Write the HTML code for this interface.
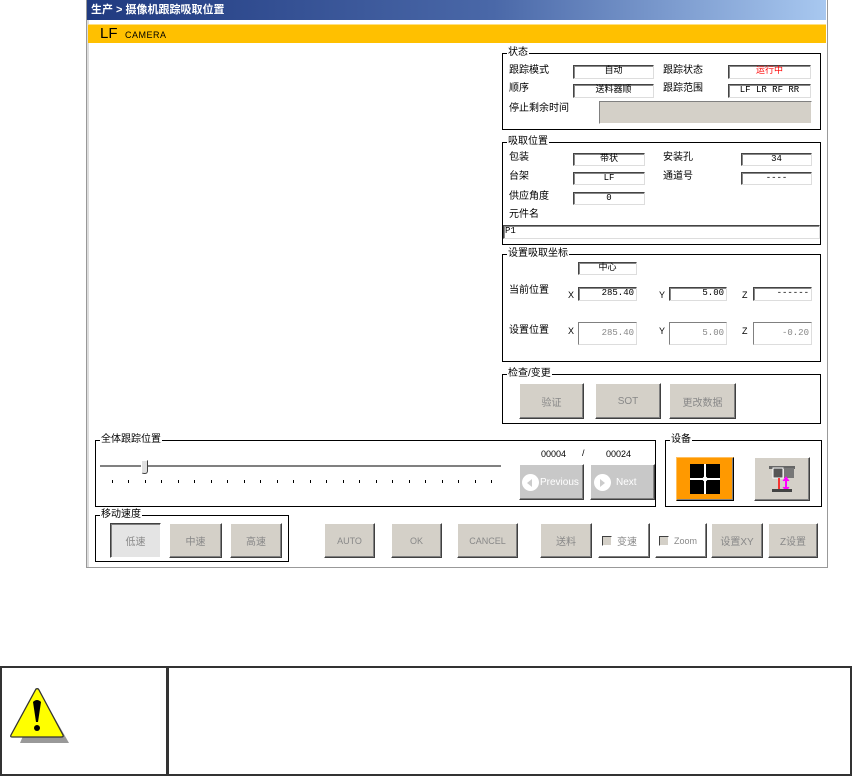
<!DOCTYPE html>
<html><head><meta charset="utf-8"><style>
*{margin:0;padding:0;box-sizing:border-box}
body{width:852px;height:776px;background:#fff;position:relative;overflow:hidden;font-family:"Liberation Sans","Noto Sans CJK SC",sans-serif;font-size:10px;color:#000}
.a{position:absolute}
.win{left:86px;top:0;width:742px;height:568px;border:1px solid #999;border-top:none;box-shadow:inset 2px 0 0 #ddd}
.title{left:87px;top:0;width:739px;height:20px;background:linear-gradient(90deg,#203a80,#4a68a8 55%,#a8c8f0);color:#fff;font-weight:bold;font-size:11px;line-height:20px;padding-left:4px}
.yb{left:88px;top:24px;width:738px;height:19px;background:#ffc000;border-top:1px solid #ffe080}
.g{position:absolute;border:1px solid #000;border-top-color:#000}
.g>span{position:absolute;top:-8px;left:4px;background:#fff;padding:0 1px;font-size:10px;line-height:14px}
.l{position:absolute;font-size:10px;line-height:12px}
.f{position:absolute;border:1px solid;border-color:#444 #ddd #ddd #444;background:#fff;font-family:"Liberation Mono","Noto Sans CJK SC",monospace;font-size:9px;line-height:11px;text-align:center;box-shadow:inset 1px 1px 0 #888}
.fr{text-align:right;padding-right:2px;color:#888}
.b{position:absolute;background:#d4d0c8;border:1px solid;border-color:#fff #404040 #404040 #fff;box-shadow:inset -1px -1px 0 #808080;color:#888;font-size:10px;text-align:center;display:flex;align-items:center;justify-content:center}
.tk{position:absolute;top:480px;width:1px;height:3px;background:#000}
</style></head><body>
<div class="a win"></div>
<div class="a title">生产 &gt; 摄像机跟踪吸取位置</div>
<div class="a yb"><span style="position:absolute;left:12px;top:1px;font-size:15px;line-height:16px">LF</span><span style="position:absolute;left:37px;top:5px;font-size:9px;letter-spacing:0.5px">CAMERA</span></div>

<div class="g" style="left:502px;top:53px;width:319px;height:77px"><span>状态</span></div>
<div class="l" style="left:509px;top:65px">跟踪模式</div>
<div class="f" style="left:573px;top:65px;width:81px;height:14px">自动</div>
<div class="l" style="left:663px;top:65px">跟踪状态</div>
<div class="f" style="left:728px;top:65px;width:83px;height:14px;color:#f00">运行中</div>
<div class="l" style="left:509px;top:83px">顺序</div>
<div class="f" style="left:573px;top:84px;width:81px;height:14px">送料器顺</div>
<div class="l" style="left:663px;top:83px">跟踪范围</div>
<div class="f" style="left:728px;top:84px;width:83px;height:14px">LF LR RF RR</div>
<div class="l" style="left:509px;top:103px">停止剩余时间</div>
<div class="a" style="left:599px;top:101px;width:213px;height:23px;background:#d4d0c8;border:1px solid;border-color:#808080 #fff #fff #808080"></div>

<div class="g" style="left:502px;top:142px;width:319px;height:103px"><span>吸取位置</span></div>
<div class="l" style="left:509px;top:152px">包装</div>
<div class="f" style="left:573px;top:153px;width:72px;height:13px">带状</div>
<div class="l" style="left:663px;top:152px">安装孔</div>
<div class="f" style="left:741px;top:153px;width:71px;height:13px">34</div>
<div class="l" style="left:509px;top:171px">台架</div>
<div class="f" style="left:573px;top:172px;width:72px;height:13px">LF</div>
<div class="l" style="left:663px;top:171px">通道号</div>
<div class="f" style="left:741px;top:172px;width:71px;height:13px">----</div>
<div class="l" style="left:509px;top:191px">供应角度</div>
<div class="f" style="left:573px;top:192px;width:72px;height:13px">0</div>
<div class="l" style="left:509px;top:209px">元件名</div>
<div class="f" style="left:503px;top:225px;width:317px;height:14px;text-align:left;padding-left:1px">P1</div>

<div class="g" style="left:502px;top:254px;width:319px;height:108px"><span>设置吸取坐标</span></div>
<div class="f" style="left:578px;top:262px;width:59px;height:13px">中心</div>
<div class="l" style="left:509px;top:285px">当前位置</div>
<div class="l" style="left:568px;top:289px;font-size:9px">X</div>
<div class="f fr" style="left:578px;top:287px;width:59px;height:14px;color:#000">285.40</div>
<div class="l" style="left:659px;top:289px;font-size:9px">Y</div>
<div class="f fr" style="left:669px;top:287px;width:58px;height:14px;color:#000">5.00</div>
<div class="l" style="left:742px;top:289px;font-size:9px">Z</div>
<div class="f fr" style="left:753px;top:287px;width:59px;height:14px;color:#000">------</div>
<div class="l" style="left:509px;top:325px">设置位置</div>
<div class="l" style="left:568px;top:325px;font-size:9px">X</div>
<div class="f fr" style="left:578px;top:322px;width:59px;height:23px;line-height:21px;border-color:#808080 #ddd #ddd #808080;box-shadow:none">285.40</div>
<div class="l" style="left:659px;top:325px;font-size:9px">Y</div>
<div class="f fr" style="left:669px;top:322px;width:58px;height:23px;line-height:21px;border-color:#808080 #ddd #ddd #808080;box-shadow:none">5.00</div>
<div class="l" style="left:742px;top:325px;font-size:9px">Z</div>
<div class="f fr" style="left:753px;top:322px;width:59px;height:23px;line-height:21px;border-color:#808080 #ddd #ddd #808080;box-shadow:none">-0.20</div>

<div class="g" style="left:502px;top:374px;width:319px;height:50px"><span>检查/变更</span></div>
<div class="b" style="left:519px;top:383px;width:65px;height:36px">验证</div>
<div class="b" style="left:595px;top:383px;width:66px;height:36px">SOT</div>
<div class="b" style="left:669px;top:383px;width:67px;height:36px">更改数据</div>

<div class="g" style="left:95px;top:440px;width:561px;height:67px"><span>全体跟踪位置</span></div>
<div class="a" style="left:100px;top:465px;width:401px;height:3px;background:#808080;border-bottom:1px solid #fff"></div>
<div class="a" style="left:141px;top:460px;width:7px;height:14px;background:#e0e0e0;border:1px solid;border-color:#fff #404040 #404040 #fff;border-radius:0 0 3px 3px"></div>
<div class="tk" style="left:112px"></div><div class="tk" style="left:128px"></div><div class="tk" style="left:145px"></div><div class="tk" style="left:161px"></div><div class="tk" style="left:178px"></div><div class="tk" style="left:194px"></div><div class="tk" style="left:211px"></div><div class="tk" style="left:227px"></div><div class="tk" style="left:244px"></div><div class="tk" style="left:260px"></div><div class="tk" style="left:277px"></div><div class="tk" style="left:293px"></div><div class="tk" style="left:310px"></div><div class="tk" style="left:326px"></div><div class="tk" style="left:343px"></div><div class="tk" style="left:359px"></div><div class="tk" style="left:376px"></div><div class="tk" style="left:392px"></div><div class="tk" style="left:409px"></div><div class="tk" style="left:425px"></div><div class="tk" style="left:442px"></div><div class="tk" style="left:458px"></div><div class="tk" style="left:475px"></div><div class="tk" style="left:491px"></div>
<div class="l" style="left:541px;top:448px;font-size:9px">00004</div>
<div class="l" style="left:582px;top:447px;font-size:9px">/</div>
<div class="l" style="left:606px;top:448px;font-size:9px">00024</div>
<div class="b" style="left:519px;top:464px;width:65px;height:36px;background:#c8c8c8;color:#fff;justify-content:flex-start;padding-left:2px"><span style="width:17px;height:17px;border-radius:50%;background:#fff;display:inline-block;margin-right:1px;position:relative"><span style="position:absolute;left:5px;top:5px;border:4px solid transparent;border-right:5px solid #ccc;border-left:0"></span></span>Previous</div>
<div class="b" style="left:590px;top:464px;width:65px;height:36px;background:#c8c8c8;color:#fff;justify-content:flex-start;padding-left:3px"><span style="width:17px;height:17px;border-radius:50%;background:#fff;display:inline-block;margin-right:5px;position:relative"><span style="position:absolute;left:6px;top:5px;border:4px solid transparent;border-left:5px solid #ccc;border-right:0"></span></span>Next</div>

<div class="g" style="left:665px;top:440px;width:157px;height:67px"><span>设备</span></div>
<div class="b" style="left:676px;top:457px;width:58px;height:44px;background:#ff9900;border-color:#ffc060 #000 #000 #ffc060">
<svg width="30" height="30" viewBox="0 0 30 30"><rect width="30" height="30" fill="#000"/><rect x="14" y="0" width="2" height="30" fill="#fff"/><rect x="0" y="14" width="30" height="2" fill="#fff"/><circle cx="15" cy="15" r="2.5" fill="#fff"/></svg></div>
<div class="b" style="left:754px;top:457px;width:56px;height:44px">
<svg width="30" height="30" viewBox="0 0 30 30"><rect x="2" y="2" width="26" height="3" fill="#666"/><rect x="6" y="4" width="10" height="10" fill="#555" stroke="#fff" stroke-width="1"/><rect x="17" y="4" width="10" height="10" fill="#777"/><line x1="12" y1="14" x2="12" y2="25" stroke="red" stroke-width="1.5"/><line x1="19" y1="14" x2="19" y2="26" stroke="#f0f" stroke-width="2"/><path d="M16 17 L19 13 L22 17 M16 23 L19 27 L22 23" fill="#f0f" stroke="#f0f"/><rect x="5" y="25" width="20" height="3" fill="#444"/></svg></div>

<div class="g" style="left:95px;top:515px;width:194px;height:47px"><span>移动速度</span></div>
<div class="b" style="left:110px;top:523px;width:51px;height:35px;border-color:#404040 #fff #fff #404040;box-shadow:inset 1px 1px 0 #808080;background:#e4e4e4">低速</div>
<div class="b" style="left:169px;top:523px;width:53px;height:35px">中速</div>
<div class="b" style="left:230px;top:523px;width:52px;height:35px">高速</div>
<div class="b" style="left:324px;top:523px;width:51px;height:35px;font-size:9px">AUTO</div>
<div class="b" style="left:391px;top:523px;width:51px;height:35px;font-size:9px">OK</div>
<div class="b" style="left:457px;top:523px;width:61px;height:35px;font-size:9px">CANCEL</div>
<div class="b" style="left:540px;top:523px;width:52px;height:35px">送料</div>
<div class="b" style="left:598px;top:523px;width:52px;height:35px;background:#fff;justify-content:flex-start;padding-left:3px"><span style="width:10px;height:10px;border:1px solid;border-color:#404040 #fff #fff #404040;background:#d4d0c8;margin-right:5px"></span>变速</div>
<div class="b" style="left:655px;top:523px;width:52px;height:35px;background:#fff;justify-content:flex-start;padding-left:3px;font-size:9px"><span style="width:10px;height:10px;border:1px solid;border-color:#404040 #fff #fff #404040;background:#d4d0c8;margin-right:5px"></span>Zoom</div>
<div class="b" style="left:711px;top:523px;width:52px;height:35px">设置XY</div>
<div class="b" style="left:768px;top:523px;width:50px;height:35px">Z设置</div>

<div class="a" style="left:0;top:666px;width:852px;height:110px;border:2px solid #333"></div>
<div class="a" style="left:166px;top:666px;width:3px;height:110px;background:#333"></div>
<svg class="a" style="left:8px;top:686px" width="64" height="62" viewBox="0 0 64 62"><path d="M33 8 L61 57 L12 57 Z" fill="#999"/><path d="M28 3 Q30 2 31 4 L55 49 Q56 51 53 51 L4 51 Q2 51 3 49 Z" fill="#ff0" stroke="#333" stroke-width="1.3"/><path d="M25 16 Q29 12 33 16 L30 36 L28 36 Z" fill="#000"/><circle cx="29" cy="42" r="3" fill="#000"/></svg>
</body></html>
